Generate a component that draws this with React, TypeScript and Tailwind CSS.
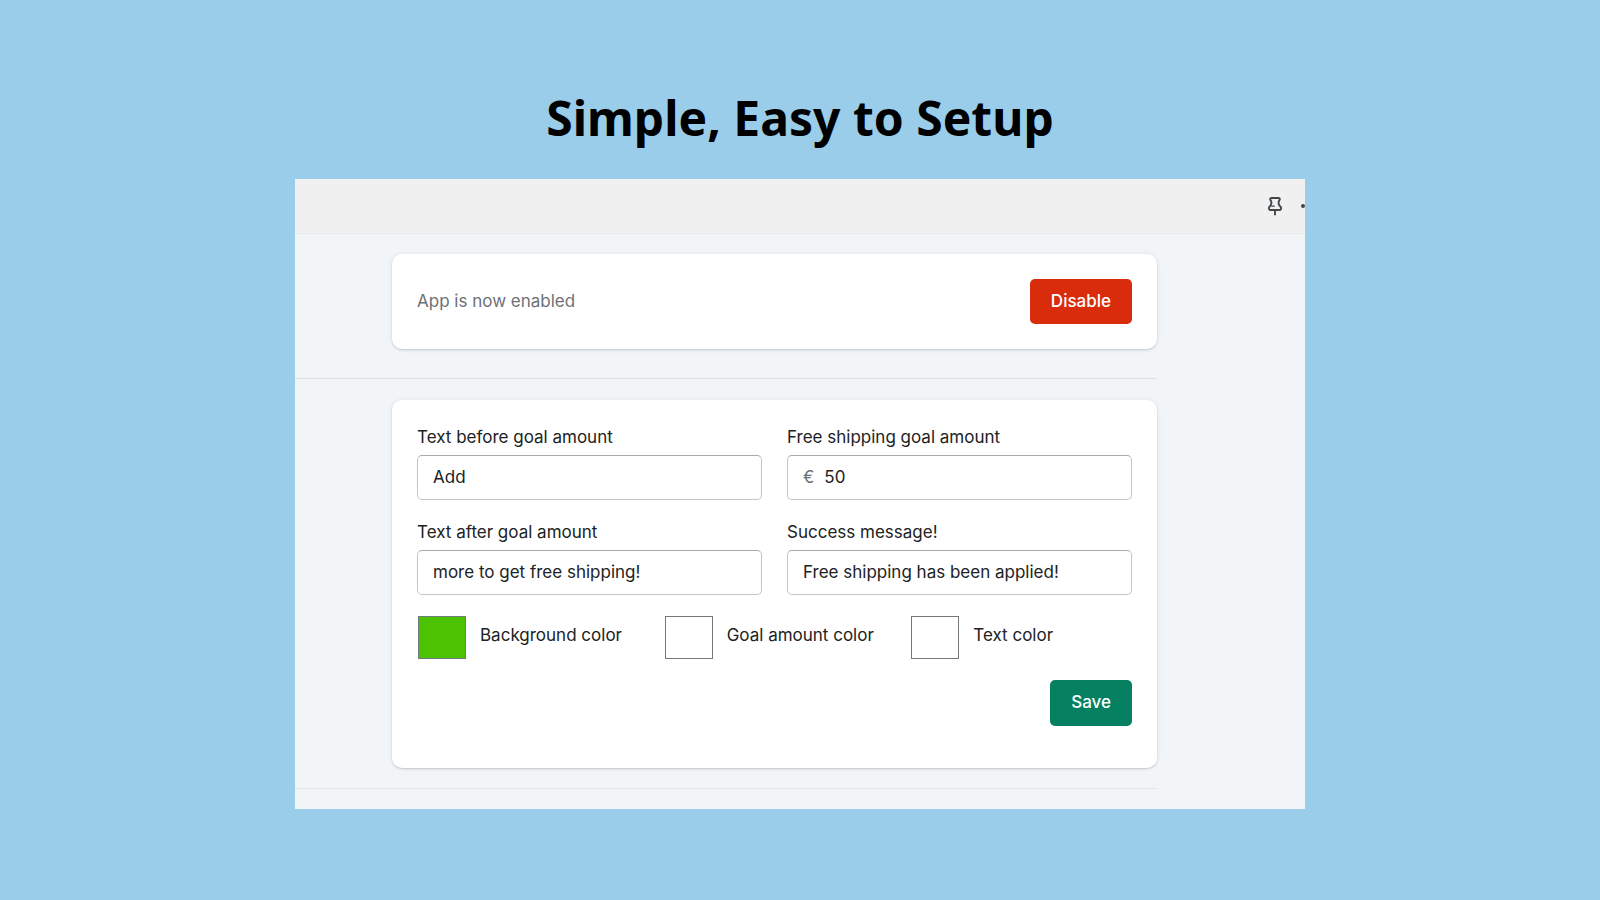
import type { ReactNode } from "react";

function PinIcon() {
  return (
    <svg
      viewBox="0 0 14 20"
      className="h-5 w-3.5"
      fill="none"
      stroke="#41464a"
      strokeWidth="1.9"
      strokeLinecap="round"
      strokeLinejoin="round"
      aria-hidden="true"
    >
      <path d="M3.4 2h7.2c1.5 0 1.5 1.5.7 2.300-.8 1-.8 2.800-.3 4.600l1.600 1.900c.9 1.300.5 3.200-.8 3.200H2.200c-1.300 0-1.700-1.900-.8-3.200L3 8.900c.5-1.800.5-3.600-.3-4.600C1.900 3.500 1.900 2 3.400 2z" />
      <path d="M7 14.200v4.300" />
      <path d="M3.800 10.200h2.400" strokeWidth="1.300" />
    </svg>
  );
}

function Card({ children, className }: { children: ReactNode; className: string }) {
  return (
    <section
      className={`rounded-[10px] bg-white shadow-[0_0_6px_rgba(23,24,24,0.06),0_1px_2px_rgba(0,0,0,0.16)] ${className}`}
    >
      {children}
    </section>
  );
}

function TextField({
  id,
  label,
  value,
  prefix,
}: {
  id: string;
  label: string;
  value: string;
  prefix?: string;
}) {
  return (
    <div className="flex min-w-0 flex-col gap-[5px]">
      <label htmlFor={id} className="leading-[25px]">
        {label}
      </label>
      <div className="flex h-[45px] items-center gap-2.5 rounded-[5px] border border-[#c2c6ca] border-t-[#a6abb0] bg-white px-[15px]">
        {prefix && <span className="text-[#6d7175]">{prefix}</span>}
        <input id={id} type="text" defaultValue={value} className="w-full min-w-0 bg-transparent outline-none" />
      </div>
    </div>
  );
}

function ColorField({ id, label, value }: { id: string; label: string; value: string }) {
  return (
    <div className="flex items-start gap-3.5 pl-px">
      <input
        id={id}
        type="color"
        defaultValue={value}
        className="h-[43px] w-12 shrink-0 cursor-pointer appearance-none border border-[#73787c] bg-white p-0 [&::-webkit-color-swatch-wrapper]:p-0 [&::-webkit-color-swatch]:rounded-none [&::-webkit-color-swatch]:border-0"
      />
      <label htmlFor={id} className="pt-[7px] leading-[25px]">
        {label}
      </label>
    </div>
  );
}

export default function App() {
  return (
    <main className="flex min-h-screen flex-col items-center bg-[#99cdea] px-6 pt-[84px] pb-[90px] font-['Inter',sans-serif] text-[17px] text-[#202223]">
      <h1 className="text-center font-['Noto_Sans',sans-serif] text-5xl leading-[68px] font-bold text-black">
        Simple, Easy to Setup
      </h1>

      <div className="mt-[27px] w-full max-w-[1010px] overflow-hidden bg-[#f1f5f8]">
        <header className="flex h-[55px] items-center justify-end gap-[19px] border-b border-[#e6e8ea] bg-[#f0f0f0]">
          <button type="button" aria-label="Pin app">
            <PinIcon />
          </button>
          <button type="button" aria-label="More actions" className="-mr-4 flex w-5 justify-start">
            <svg viewBox="0 0 20 4" className="h-1 w-5" fill="#41464a" aria-hidden="true">
              <circle cx="2" cy="2" r="2" />
              <circle cx="9" cy="2" r="2" />
              <circle cx="16" cy="2" r="2" />
            </svg>
          </button>
        </header>

        <div className="mr-[148px]">
          <div className="border-b border-[#dde1e4] pt-5 pb-[29px] pl-[97px]">
            <Card className="flex items-center justify-between p-[25px]">
              <p className="text-[#6d7175]">App is now enabled</p>
              <button
                type="button"
                className="h-[45px] rounded-[5px] bg-[#d82c0d] px-[21px] font-medium text-white"
              >
                Disable
              </button>
            </Card>
          </div>

          <div className="border-b border-[#e1e4e7] pt-[21px] pb-5 pl-[97px]">
            <Card className="px-[25px] pt-[25px] pb-[42px]">
              <form className="flex flex-col gap-[21px]">
                <div className="grid grid-cols-2 gap-x-[25px] gap-y-5">
                  <TextField id="before" label="Text before goal amount" value="Add" />
                  <TextField id="goal" label="Free shipping goal amount" value="50" prefix="€" />
                  <TextField id="after" label="Text after goal amount" value="more to get free shipping!" />
                  <TextField id="success" label="Success message!" value="Free shipping has been applied!" />
                </div>
                <div className="grid grid-cols-3 gap-x-[25px]">
                  <ColorField id="bg-color" label="Background color" value="#4bc202" />
                  <ColorField id="goal-color" label="Goal amount color" value="#ffffff" />
                  <ColorField id="text-color" label="Text color" value="#ffffff" />
                </div>
                <button
                  type="button"
                  className="h-[46px] self-end rounded-[5px] bg-[#058060] px-[21px] font-medium text-white"
                >
                  Save
                </button>
              </form>
            </Card>
          </div>
          <div className="h-5" />
        </div>
      </div>
    </main>
  );
}
